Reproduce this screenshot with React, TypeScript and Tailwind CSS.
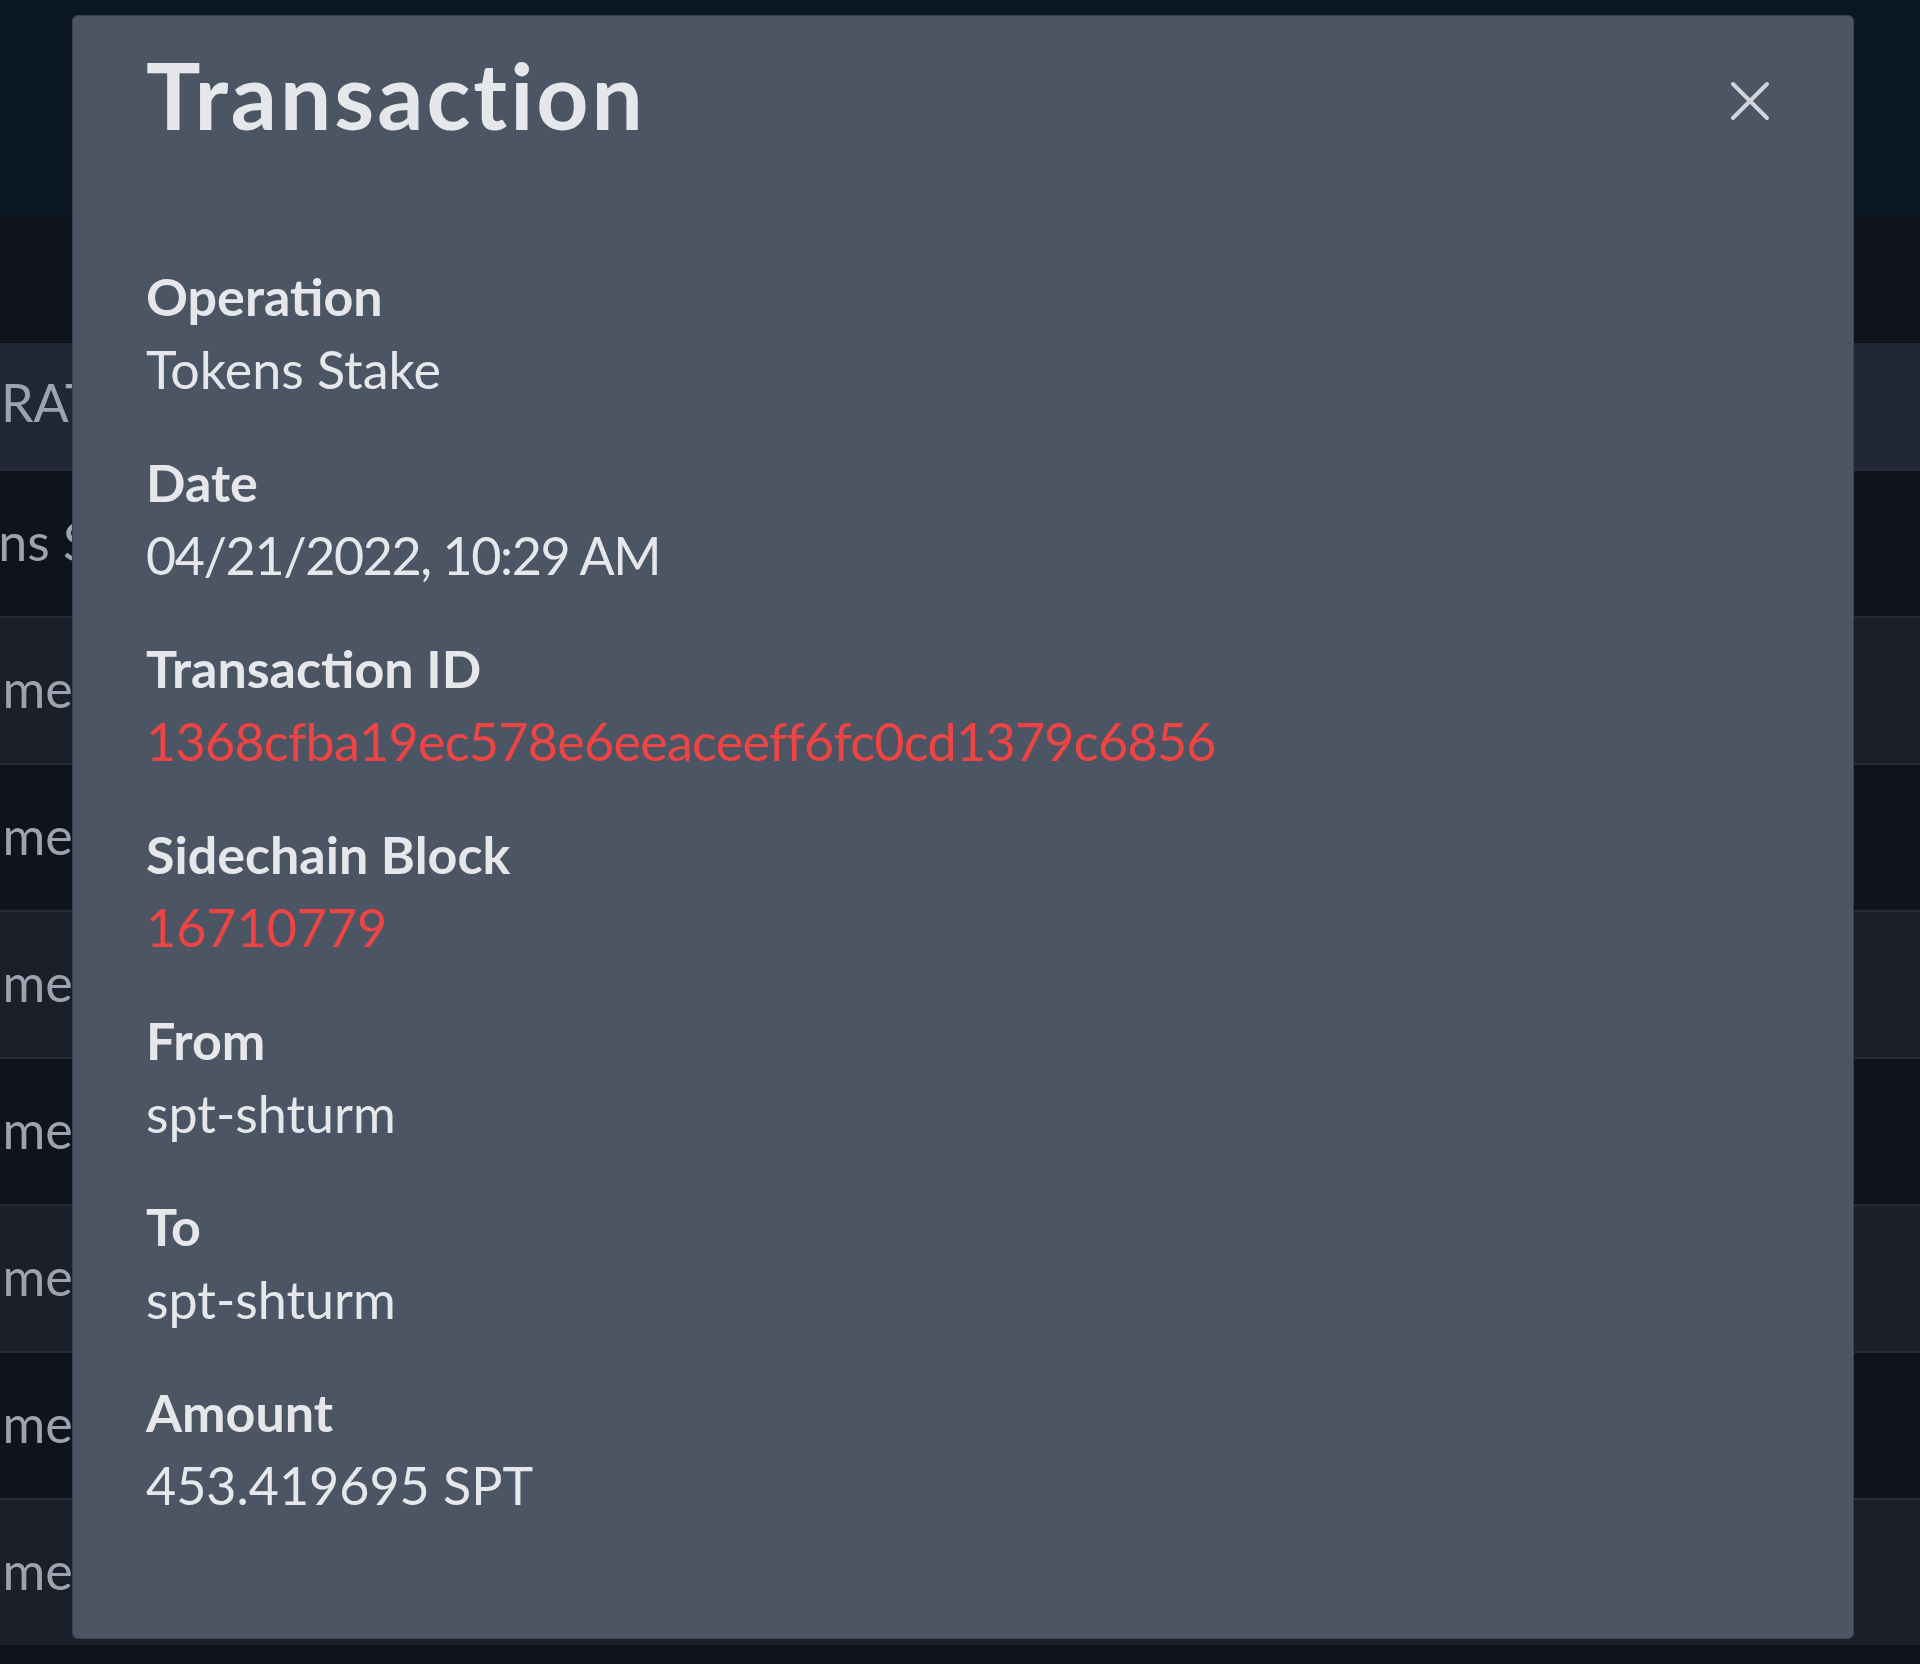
import React from "react";

const fields = [
  { label: "Operation", value: "Tokens Stake" },
  { label: "Date", value: "04/21/2022, 10:29 AM", tight: "tracking-[-1.4px]" },
  { label: "Transaction ID", value: "1368cfba19ec578e6eeaceeff6fc0cd1379c6856", link: true, tight: "tracking-[-0.7px]" },
  { label: "Sidechain Block", value: "16710779", link: true },
  { label: "From", value: "spt-shturm" },
  { label: "To", value: "spt-shturm" },
  { label: "Amount", value: "453.419695 SPT" },
];

const rows = [
  "Tokens Stake",
  "Comments Curation Reward",
  "Comments Curation Reward",
  "Comments Curation Reward",
  "Comments Curation Reward",
  "Comments Curation Reward",
  "Comments Curation Reward",
  "Comments Curation Reward",
];

function CloseIcon() {
  return (
    <svg width="40" height="40" viewBox="0 0 40 40" fill="none">
      <path d="M3 3L37 37M37 3L3 37" stroke="#d1d5db" strokeWidth="4" strokeLinecap="round" />
    </svg>
  );
}

export default function App() {
  return (
    <div className="relative h-[1664px] w-full overflow-hidden bg-[#0f131b] font-['Lato',sans-serif]">
      {/* page behind the modal */}
      <div className="h-[217px] bg-[#0c1821]" />
      <div className="h-[126px] bg-[#10141c]" />
      <div className="flex h-[126px] items-center pb-[8px] bg-[#222833] text-[52px] uppercase text-[#9ca3af]">
        <span className="-ml-[102px] whitespace-nowrap">Operation</span>
      </div>
      {rows.map((r, i) => (
        <div
          key={i}
          className={`flex h-[147px] items-center pb-[6px] border-t-2 border-[#262c37] text-[52px] text-[#9ca3af] ${
            i % 2 === 0 ? "bg-[#0f131b]" : "bg-[#1a1f29]"
          }`}
        >
          <span className={`whitespace-nowrap ${i === 0 ? "-ml-[108px]" : "-ml-[104px]"}`}>{r}</span>
        </div>
      ))}

      {/* modal */}
      <div className="absolute left-[72px] top-[15px] w-[1782px] rounded-[6px] border border-[#3b4351] bg-[#4b5563]">
        <div className="flex items-start justify-between pl-[73px] pr-[75px] pt-[24px]">
          <h2 className="text-[91px] font-bold leading-[109px] tracking-[3px] text-[#e5e7eb]">Transaction</h2>
          <button className="mt-[33px] flex h-[56px] w-[56px] items-center justify-center">
            <CloseIcon />
          </button>
        </div>
        <div className="mt-[111px] flex flex-col gap-[40px] pl-[73px] pr-[75px] pb-[116px]">
          {fields.map((f) => (
            <div key={f.label} className="flex flex-col">
              <div className="text-[52px] font-bold leading-[73px] text-[#e5e7eb]">{f.label}</div>
              <div
                className={`text-[52px] leading-[73px] ${f.tight ?? ""} ${f.link ? "text-[#ef4444]" : "text-[#e5e7eb]"}`}
              >
                {f.value}
              </div>
            </div>
          ))}
        </div>
      </div>
    </div>
  );
}
